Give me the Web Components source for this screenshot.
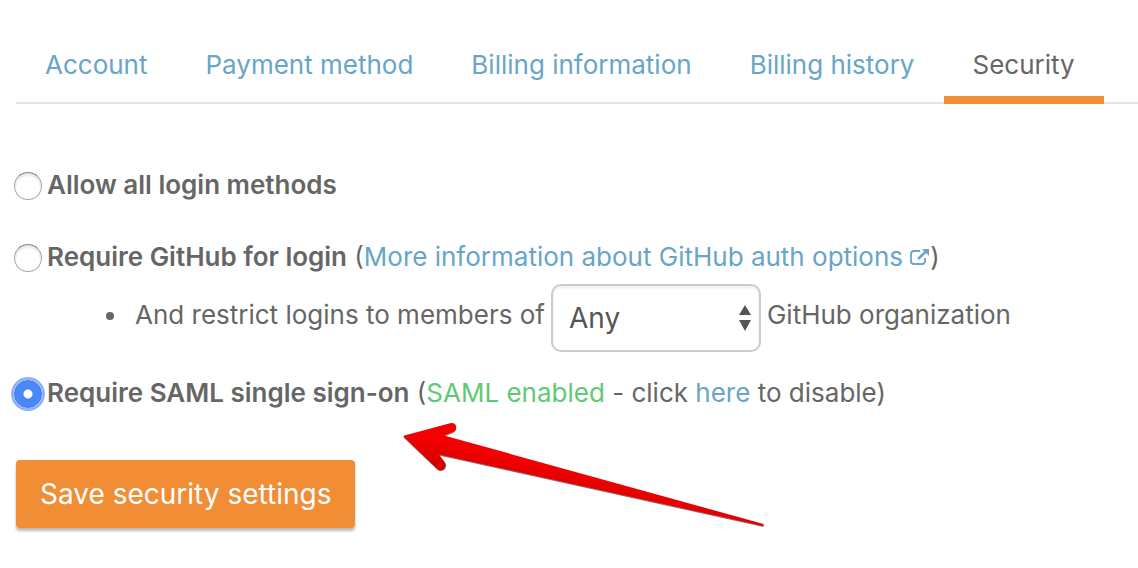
<!DOCTYPE html>
<html lang="en">
<head>
<meta charset="utf-8">
<meta name="viewport" content="width=device-width, initial-scale=1">
<title>Account security</title>
<style>
  body {
    margin: 0;
    background: #fff;
    color: #666;
    font: 26px/36px Inter, "Liberation Sans", sans-serif;
  }
</style>
</head>
<body>
<account-tabs>
  <account-tab href="#account">Account</account-tab>
  <account-tab href="#payment">Payment method</account-tab>
  <account-tab href="#billing">Billing information</account-tab>
  <account-tab href="#history">Billing history</account-tab>
  <account-tab href="#security" current>Security</account-tab>
</account-tabs>
<security-form></security-form>

<script>
class BaseElement extends HTMLElement {
  constructor() {
    super();
    this.attachShadow({ mode: "open" }).innerHTML = this.constructor.markup;
  }
}

customElements.define("account-tabs", class extends BaseElement {
  static markup = `
    <style>
      :host { display: block; padding: 32px 0 0 16px; }
      nav { display: flex; box-shadow: inset 0 -2px #e5e5e5; }
    </style>
    <nav aria-label="Account settings"><slot></slot></nav>`;
});

customElements.define("account-tab", class extends BaseElement {
  static markup = `
    <style>
      :host { display: block; flex: none; }
      a {
        display: block;
        padding: 15px 29px 13px;
        border-bottom: 8px solid transparent;
        color: #67a5c9;
        text-decoration: none;
      }
      :host([current]) a { color: #666; border-color: #f18d35; }
    </style>
    <a><slot></slot></a>`;
  connectedCallback() {
    const link = this.shadowRoot.querySelector("a");
    link.href = this.getAttribute("href");
    if (this.hasAttribute("current")) link.setAttribute("aria-current", "page");
  }
});

customElements.define("external-icon", class extends BaseElement {
  static markup = `
    <style>
      :host { display: inline-block; }
      svg { display: block; }
    </style>
    <svg width="20" height="18" viewBox="0 0 20 18" fill="none" stroke="currentColor" aria-hidden="true">
      <path d="M10 3H4Q1 3 1 6V13Q1 16 4 16H12Q15 16 15 13V10" stroke-width="1.800"/>
      <path d="M8 11L16 3.500" stroke-width="2.600"/>
      <path d="M12 1H19V8Z" fill="currentColor" stroke="none"/>
    </svg>`;
});

customElements.define("pointer-arrow", class extends BaseElement {
  static markup = `
    <style>
      :host { display: block; pointer-events: none; }
      svg { display: block; }
    </style>
    <svg width="364" height="110" viewBox="0 0 364 110" aria-hidden="true">
      <defs>
        <linearGradient id="red" gradientUnits="userSpaceOnUse" x1="186" y1="53" x2="181" y2="76">
          <stop offset="0" stop-color="#f50404"/>
          <stop offset="1" stop-color="#d40000"/>
        </linearGradient>
        <filter id="shade" x="-5%" y="-5%" width="110%" height="115%">
          <feDropShadow dx="0" dy="1" stdDeviation="0.600" flood-color="#300" flood-opacity=".6"/>
        </filter>
      </defs>
      <path fill="url(#red)" filter="url(#shade)" d="M1 17Q0 16 1.500 15.500L48 3Q52 2.500 53 6Q54 10 50 12L41 15.500L360.500 104V106L36 34.500L42 42.500Q44 46 41 49Q37 51.500 34 48.500Z"/>
    </svg>`;
});

customElements.define("security-form", class extends BaseElement {
  static markup = `
    <style>
      :host { display: block; padding: 63px 16px 40px; }
      form, fieldset { margin: 0; padding: 0; border: 0; min-width: 0; }
      a { color: #67a5c9; text-decoration: none; }
      label { font-weight: 600; }
      .option { display: flex; align-items: center; position: relative; margin-left: -2px; }
      .option + .option { margin-top: 36px; }
      .option p { margin: 0 0 0 5px; }
      input {
        appearance: none;
        flex: none;
        width: 28px;
        height: 28px;
        margin: 2px 0 0;
        border: 1px solid #aaa;
        border-top-color: #888;
        border-radius: 50%;
        background: #fff;
        box-shadow: inset 0 2px 3px #ddd;
      }
      input:checked {
        border-color: #3476ee;
        background: radial-gradient(circle, #fff 4px, #4a88f7 5px);
        box-shadow: 0 0 0 3px #90b3f4;
      }
      .on { color: #5fc974; }
      ul { margin: 9px 0 23px; padding: 0 0 0 90px; list-style: none; }
      li { display: flex; align-items: flex-start; gap: 6px; line-height: 62px; }
      li::before {
        content: "";
        flex: none;
        width: 8px;
        height: 8px;
        margin: 28px 15px 0 0;
        border-radius: 50%;
        background: #666;
      }
      li label { font-weight: 400; }
      select {
        appearance: none;
        box-sizing: border-box;
        width: 210px;
        height: 68px;
        padding: 0 16px;
        border: 2px solid #ccc;
        border-radius: 10px;
        color: #555;
        background: #fff url('data:image/svg+xml,<svg xmlns="http://www.w3.org/2000/svg" width="12" height="26"><path d="M0 10L6 0L12 10ZM0 15H12L6 26Z" fill="%23555"/></svg>') no-repeat right 8px center;
        box-shadow: inset 0 2px 3px #eee;
        font: 28px/36px Inter, "Liberation Sans", sans-serif;
      }
      button {
        display: block;
        height: 68px;
        margin-top: 49px;
        padding: 0 24px;
        border: 0;
        border-radius: 4px;
        color: #fff;
        background: #f18d35;
        box-shadow: 0 3px 3px #bbb;
        font: 28px/36px Inter, "Liberation Sans", sans-serif;
      }
      pointer-arrow { position: absolute; left: 389px; top: 45px; }
    </style>
    <form>
      <fieldset aria-label="Login methods">
        <div class="option">
          <input type="radio" name="login" id="all">
          <p><label for="all">Allow all login methods</label></p>
        </div>
        <div class="option">
          <input type="radio" name="login" id="github">
          <p><label for="github">Require GitHub for login</label> (<a href="#github-auth">More information about GitHub auth options <external-icon></external-icon></a>)</p>
        </div>
        <ul>
          <li>
            <label for="org">And restrict logins to members of</label>
            <select id="org"><option>Any</option></select>
            <span>GitHub organization</span>
          </li>
        </ul>
        <div class="option">
          <input type="radio" name="login" id="saml" checked>
          <p><label for="saml">Require SAML single sign-on</label> (<span class="on">SAML enabled</span> - click <a href="#disable">here</a> to disable)</p>
          <pointer-arrow></pointer-arrow>
        </div>
      </fieldset>
      <button type="button">Save security settings</button>
    </form>`;
});
</script>
</body>
</html>
